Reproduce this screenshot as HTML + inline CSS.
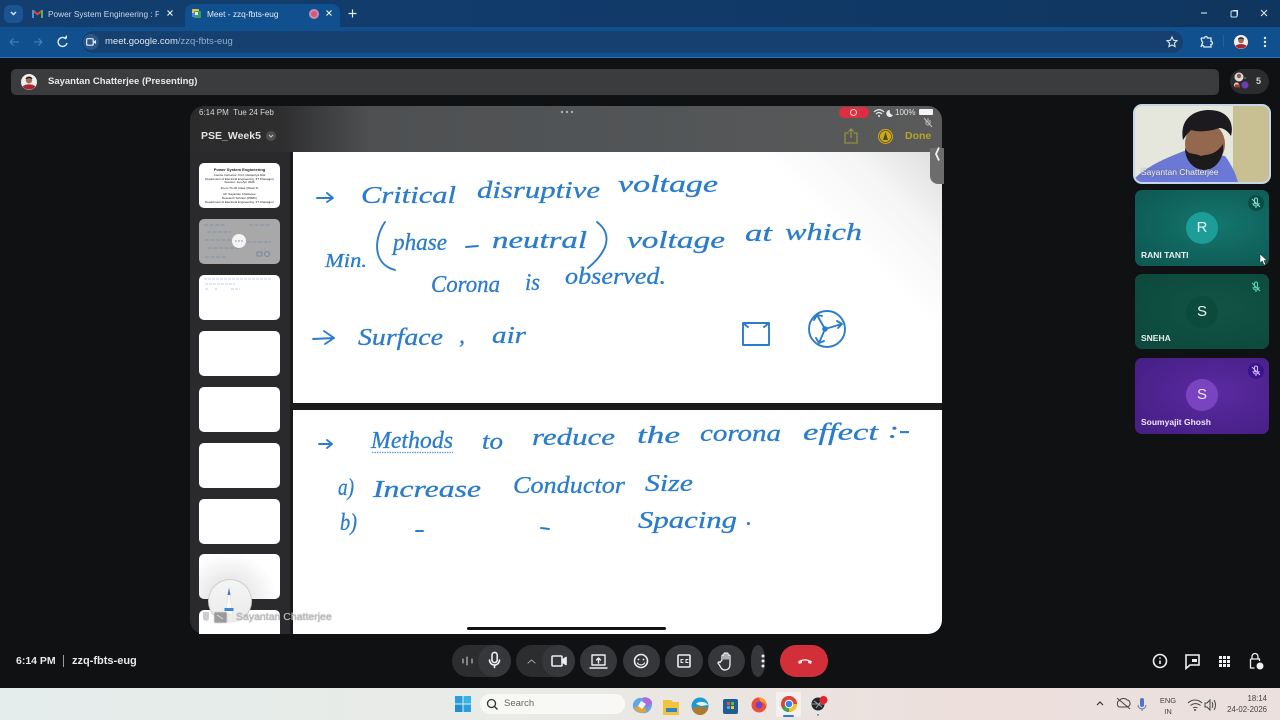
<!DOCTYPE html>
<html><head><meta charset="utf-8"><title>Meet - zzq-fbts-eug</title>
<style>
html,body{margin:0;padding:0;width:1280px;height:720px;overflow:hidden;background:#101113;font-family:"Liberation Sans",sans-serif}
#w{position:absolute;left:0;top:0;width:1280px;height:720px;background:#101113;overflow:hidden;filter:blur(.3px)}
.a{position:absolute}
.t{position:absolute;white-space:nowrap}
svg{position:absolute;overflow:visible}
.th{position:absolute;left:199px;width:81px;background:#fff;border-radius:5px}
.hw text{font-family:"Liberation Serif",serif;font-style:italic;fill:#2b7ccb;stroke:#2b7ccb;stroke-width:.3;font-size:24px}
.hs{fill:none;stroke:#2b7ccb;stroke-width:1.900;stroke-linecap:round;stroke-linejoin:round}
.c{position:absolute;top:645px;height:32px;background:#2c2d2f;border-radius:16px}
.ic{fill:none;stroke:#eceef0;stroke-width:1.6;stroke-linecap:round;stroke-linejoin:round}
</style></head><body><div id="w">
<!-- chrome -->
<div class="a" style="left:0;top:0;width:1280px;height:27px;background:linear-gradient(90deg,#123f70,#113a69 50%,#10365f)"></div>
<div class="a" style="left:0;top:27px;width:1280px;height:30px;background:#11508f"></div>
<div class="a" style="left:0;top:57px;width:1280px;height:1px;background:#2e74b4"></div>
<div class="a" style="left:4px;top:5px;width:19px;height:18px;background:#185592;border-radius:6px"></div>
<svg style="left:0;top:0" width="40" height="28"><path d="M11 12l2.5 2.5L16 12" fill="none" stroke="#dfe9f3" stroke-width="1.400"/></svg>
<div class="a" style="left:185px;top:4px;width:155px;height:23px;background:#11508f;border-radius:8px 8px 0 0"></div>
<svg style="left:32px;top:9px" width="11" height="9" viewBox="0 0 11 9"><path d="M0.800 1.500L5.500 5.200 10.200 1.500" fill="none" stroke="#e0463a" stroke-width="2"/><path d="M1 1v8" stroke="#5a8fd8" stroke-width="2"/><path d="M10 1v8" stroke="#4fb06a" stroke-width="2"/></svg>
<div class="t" style="left:48px;top:8px;width:111px;overflow:hidden;font-size:8.300px;line-height:12px;color:#c9d6e4">Power System Engineering : Pro</div>
<svg style="left:166px;top:9px" width="9" height="9"><path d="M1.500 1.500l5 5M6.500 1.500l-5 5" stroke="#e6edf4" stroke-width="1.200"/></svg>
<svg style="left:191px;top:8px" width="11" height="11" viewBox="0 0 11 11"><rect x="1" y="1" width="7" height="8" rx="1" fill="#f1c232"/><rect x="3" y="3" width="7" height="7" rx="1" fill="#3d9b5f"/><rect x="1" y="5" width="3" height="4" fill="#4285f4"/><rect x="4" y="4" width="3" height="3" fill="#dfe9f3"/></svg>
<div class="t" style="left:207px;top:8px;font-size:8.300px;line-height:12px;color:#e3ebf3">Meet - zzq-fbts-eug</div>
<div class="a" style="left:309px;top:9px;width:6px;height:6px;border-radius:50%;background:#d9557c;border:2px solid #c88db0"></div>
<svg style="left:325px;top:9px" width="9" height="9"><path d="M1.500 1.500l5 5M6.500 1.500l-5 5" stroke="#e6edf4" stroke-width="1.200"/></svg>
<svg style="left:348px;top:9px" width="9" height="9"><path d="M4.500 0.500v8M0.500 4.500h8" stroke="#e6edf4" stroke-width="1.200"/></svg>
<svg style="left:1120px;top:0" width="160" height="28"><path d="M81 13h6" stroke="#d9e3ee" stroke-width="1.100"/><rect x="111" y="11" width="6" height="6" rx="1" fill="none" stroke="#d9e3ee"/><path d="M113 10.500h4.500v5" fill="none" stroke="#d9e3ee"/><path d="M141 10l6 6M147 10l-6 6" stroke="#d9e3ee" stroke-width="1.100"/></svg>
<svg style="left:0;top:27px" width="80" height="30"><path d="M10 15h9M10 15l3.500-3.500M10 15l3.500 3.500M34 15h8M42 15l-3.500-3.500M42 15l-3.500 3.500" fill="none" stroke="#4b83ba" stroke-width="1.100"/><path d="M66 12a4.500 4.500 0 1 0 1 4" fill="none" stroke="#e2eaf3" stroke-width="1.400"/><path d="M63.500 11.500h3.500V8z" fill="#e2eaf3"/></svg>
<div class="a" style="left:82px;top:31px;width:1101px;height:22px;background:#15406f;border-radius:11px"></div>
<div class="a" style="left:83px;top:34px;width:16px;height:16px;background:#2a5788;border-radius:50%"></div>
<svg style="left:86px;top:38px" width="11" height="8"><rect x=".7" y=".7" width="6.500" height="6.500" rx="1" fill="none" stroke="#e3ebf3" stroke-width="1.200"/><path d="M7.500 3.500L10 2v4L7.500 4.500z" fill="#e3ebf3"/></svg>
<div class="t" style="left:105px;top:36px;font-size:9.500px;line-height:12px;color:#dce6f0">meet.google.com<span style="color:#92aecb">/zzq-fbts-eug</span></div>
<svg style="left:1166px;top:36px" width="12" height="12" viewBox="0 0 12 12"><path d="M6 1l1.500 3.300 3.500.4-2.600 2.400.7 3.500L6 8.900l-3.100 1.700.7-3.500L1 4.700l3.500-.4z" fill="none" stroke="#dce6f0" stroke-width="1.100"/></svg>
<svg style="left:1199px;top:35px" width="14" height="14" viewBox="0 0 14 14"><path d="M2 3h3.500a1.500 1.500 0 0 1 3 0H12v3.500a1.500 1.500 0 0 1 0 3V12H5a1.500 1.500 0 0 0-3 0 M2 3l1 3.500a1.500 1.500 0 0 1 0 2.500L2 12" fill="none" stroke="#e3ebf3" stroke-width="1.300"/></svg>
<div class="a" style="left:1223px;top:35px;width:1px;height:12px;background:#2a5f95"></div>
<svg style="left:1234px;top:35px" width="14" height="14" viewBox="0 0 14 14"><circle cx="7" cy="7" r="7" fill="#f2eeee"/><circle cx="7" cy="5.500" r="2.800" fill="#a26a52"/><path d="M4 4.500c0-3 6-3 6 0l-3-1z" fill="#2a1a16"/><path d="M1.500 11c1.500-2.500 9.500-2.500 11 0a7 7 0 0 1-11 0z" fill="#a8272e"/></svg>
<svg style="left:1263px;top:36px" width="4" height="12"><circle cx="2" cy="2" r="1.200" fill="#e3ebf3"/><circle cx="2" cy="6" r="1.200" fill="#e3ebf3"/><circle cx="2" cy="10" r="1.200" fill="#e3ebf3"/></svg>

<!-- presenter bar -->
<div class="a" style="left:11px;top:69px;width:1208px;height:26px;background:#3b3c3d;border-radius:5px"></div>
<svg style="left:21px;top:74px" width="16" height="16" viewBox="0 0 14 14"><circle cx="7" cy="7" r="7" fill="#f2eeee"/><circle cx="7" cy="5.500" r="2.800" fill="#a26a52"/><path d="M4 4.500c0-3 6-3 6 0l-3-1z" fill="#2a1a16"/><path d="M1.500 11c1.500-2.500 9.500-2.500 11 0a7 7 0 0 1-11 0z" fill="#a8272e"/></svg>
<div class="t" style="left:48px;top:75px;font-size:9.500px;line-height:14px;font-weight:bold;color:#e8e9ea">Sayantan Chatterjee (Presenting)</div>
<div class="a" style="left:1230px;top:69px;width:39px;height:25px;background:#2b2c2d;border-radius:13px"></div>
<svg style="left:1233px;top:71px" width="16" height="18"><circle cx="6" cy="6" r="4.500" fill="#e4d9d6"/><circle cx="6" cy="5" r="2.200" fill="#8c5a4a"/><circle cx="3.500" cy="14" r="2.500" fill="#e6d6d2"/><rect x="2" y="13.500" width="5" height="3" fill="#a33"/><circle cx="12" cy="14" r="3.500" fill="#6b3fb4"/><circle cx="12" cy="7" r="1" fill="#2f8a5f"/></svg>
<div class="t" style="left:1256px;top:76px;font-size:9px;line-height:11px;font-weight:bold;color:#cfd0d2">5</div>

<!-- presentation -->
<div class="a" style="left:190px;top:106px;width:752px;height:528px;border-radius:14px;overflow:hidden;background:#1b1b1c">
 <div class="a" style="left:0;top:0;width:752px;height:46px;background:linear-gradient(90deg,#2b2b2c 0,#2e2e2f 12%,#4e5052 24%,#525557 60%,#5a5a5a 100%)"></div>
 <div class="a" style="left:0;top:46px;width:100px;height:482px;background:#2a2a2c"></div>
 <div class="a" style="left:103px;top:46px;width:649px;height:251px;background:linear-gradient(225deg,#dcdcdc 0,#f5f5f5 10%,#fff 20%)"></div>
 <div class="a" style="left:103px;top:304px;width:649px;height:224px;background:#fff"></div>
</div>
<div class="t" style="left:199px;top:107px;font-size:8px;line-height:11px;color:#d6d6d6">6:14 PM &nbsp;Tue 24 Feb</div>
<div class="t" style="left:201px;top:129px;font-size:10.500px;line-height:14px;font-weight:bold;color:#e2e2e2">PSE_Week5</div>
<div class="a" style="left:266px;top:131px;width:10px;height:10px;border-radius:50%;background:#4c4e50"></div>
<svg style="left:266px;top:131px" width="10" height="10"><path d="M3 4l2 2 2-2" fill="none" stroke="#c9c9c9"/></svg>
<svg style="left:560px;top:110px" width="14" height="4"><circle cx="2" cy="2" r="1.200" fill="#a9abad"/><circle cx="7" cy="2" r="1.200" fill="#a9abad"/><circle cx="12" cy="2" r="1.200" fill="#a9abad"/></svg>
<div class="a" style="left:839px;top:107px;width:30px;height:11px;background:#dc2e3f;border-radius:6px"></div>
<div class="a" style="left:850px;top:109px;width:5px;height:5px;border:1px solid #f6d5d8;border-radius:50%"></div>
<svg style="left:873px;top:108px" width="22" height="10"><path d="M1 4c3-3 7-3 10 0M3 6c2-2 4-2 6 0" fill="none" stroke="#eee" stroke-width="1.200"/><circle cx="6" cy="8" r="1" fill="#eee"/><path d="M17 2a3.500 3.500 0 1 0 3 5 3.500 3.500 0 0 1-3-5z" fill="#eee"/></svg>
<div class="t" style="left:895px;top:107px;font-size:8px;line-height:11px;color:#e4e4e4">100%</div>
<div class="a" style="left:919px;top:109px;width:14px;height:6px;background:#f4f4f4;border-radius:1px"></div>
<svg style="left:923px;top:117px" width="10" height="11"><path d="M5 1v5M3 3v3a2 2 0 0 0 4 0V3M1 1l8 9" fill="none" stroke="#bdbdbd"/></svg>
<svg style="left:844px;top:128px" width="14" height="16"><path d="M4.500 5H1v10h12V5H9.500M7 10V1M4.500 3.500L7 1l2.500 2.500" fill="none" stroke="#a09a3a" stroke-width="1.100"/></svg>
<div class="a" style="left:878px;top:129px;width:15px;height:15px;border-radius:50%;background:#c9a81e"></div>
<svg style="left:878px;top:129px" width="15" height="15"><circle cx="7.500" cy="7.500" r="6" fill="none" stroke="#4d4a20" stroke-width=".7"/><path d="M7.500 3L5 11h5z" fill="#4d4a20"/></svg>
<div class="t" style="left:905px;top:130px;width:26px;overflow:hidden;font-size:10.500px;line-height:13px;font-weight:bold;color:#b5a52b">Done</div>
<div class="a" style="left:930px;top:148px;width:14px;height:36px;background:#6c6c6c;border-radius:0 0 0 8px"></div>
<svg style="left:933px;top:146px" width="8" height="16"><path d="M6 1.500L3 8l3 6.500" fill="none" stroke="#f2f2f2" stroke-width="1.800"/></svg>

<!-- thumbnails -->
<div class="th" style="top:163px;height:45px;text-align:center;color:#222;font-size:3px;line-height:3.800px"><div style="font-size:4px;font-weight:bold;padding-top:5px">Power System Engineering</div><div style="margin-top:2px">Course Instructor: Prof. Debapriya Das<br>Department of Electrical Engineering, IIT Kharagpur<br>Session: Jan-Apr 2026</div><div style="margin-top:2px">Zoom TA-03 Class (Week 5)</div><div style="margin-top:2px">Mr. Sayantan Chatterjee<br>Research Scholar (PMRF)<br>Department of Electrical Engineering, IIT Kharagpur</div></div>
<div class="th" style="top:219px;height:45px;background:#a8a8a8;overflow:hidden">
 <svg style="left:0;top:0" width="81" height="45"><path d="M5 6h22M8 13h24M6 21h30M9 29h32M6 38h22M48 23h24M50 6h22" stroke="#7f93ab" stroke-width=".9" stroke-dasharray="4 1.500" fill="none"/><rect x="58" y="33" width="5" height="4" fill="none" stroke="#5f7ea1" stroke-width=".7"/><circle cx="68" cy="35" r="2.500" fill="none" stroke="#5f7ea1" stroke-width=".7"/></svg>
 <div class="a" style="left:33px;top:15px;width:14px;height:14px;border-radius:50%;background:#f4f4f4"></div>
 <svg style="left:36px;top:21px" width="8" height="2"><circle cx="1" cy="1" r=".7" fill="#888"/><circle cx="4" cy="1" r=".7" fill="#888"/><circle cx="7" cy="1" r=".7" fill="#888"/></svg>
</div>
<div class="th" style="top:275px;height:45px;overflow:hidden"><svg style="left:0;top:0" width="81" height="45"><path d="M5 4h68M6 9h30M6 14h3M16 14h2M32 14h9" stroke="#aac2de" stroke-width=".8" stroke-dasharray="3 1" fill="none"/></svg></div>
<div class="th" style="top:331px;height:45px"></div>
<div class="th" style="top:387px;height:45px"></div>
<div class="th" style="top:443px;height:45px"></div>
<div class="th" style="top:499px;height:45px"></div>
<div class="th" style="top:554px;height:45px;background:radial-gradient(circle at 30px 46px,#d6d6d6 0,#eee 38%,#fff 70%)"></div>
<div class="th" style="top:610px;height:24px;border-radius:5px 5px 0 0"></div>
<div class="a" style="left:208px;top:579px;width:42px;height:42px;border-radius:50%;background:linear-gradient(180deg,#f4f4f4,#ececec);border:1px solid #cfcfcf;border-bottom-color:transparent"></div>
<svg style="left:222px;top:586px" width="14" height="30"><path d="M7 1L3.500 28h7z" fill="#fafafa" stroke="#dedede" stroke-width=".6"/><path d="M7 2L5.500 9h3z" fill="#3f7cc6"/><rect x="2.500" y="22" width="9" height="3" fill="#3f86d6"/></svg>
<svg style="left:200px;top:610px" width="36" height="16"><path d="M6 2v6M3 2v6a3 3 0 0 0 6 0V2z" fill="#b9b9b9" opacity=".7"/><rect x="14" y="2" width="13" height="11" rx="1.500" fill="#777" stroke="#ccc" stroke-width=".8" opacity=".7"/><path d="M17 5l6 4" stroke="#ddd"/></svg>
<div class="t" style="left:236px;top:611px;font-size:10.500px;line-height:13px;color:#c2c2c2;text-shadow:0 0 1px #666">Sayantan Chatterjee</div>
<div class="a" style="left:467px;top:627px;width:199px;height:3px;background:#111;border-radius:2px"></div>

<!-- handwriting -->
<svg class="hw" style="left:0;top:0" width="1280" height="720">
 <text x="361" y="203" textLength="95" lengthAdjust="spacingAndGlyphs">Critical</text>
 <text x="477" y="198" textLength="123" lengthAdjust="spacingAndGlyphs">disruptive</text>
 <text x="618" y="192" textLength="100" lengthAdjust="spacingAndGlyphs">voltage</text>
 <text x="325" y="267" textLength="42" lengthAdjust="spacingAndGlyphs" style="font-size:20px">Min.</text>
 <text x="393" y="250" textLength="54" lengthAdjust="spacingAndGlyphs">phase</text>
 <text x="492" y="248" textLength="95" lengthAdjust="spacingAndGlyphs">neutral</text>
 <text x="627" y="248" textLength="98" lengthAdjust="spacingAndGlyphs">voltage</text>
 <text x="745" y="241" textLength="27" lengthAdjust="spacingAndGlyphs">at</text>
 <text x="785" y="240" textLength="77" lengthAdjust="spacingAndGlyphs">which</text>
 <text x="431" y="292" textLength="69" lengthAdjust="spacingAndGlyphs">Corona</text>
 <text x="525" y="290" textLength="15" lengthAdjust="spacingAndGlyphs">is</text>
 <text x="565" y="284" textLength="101" lengthAdjust="spacingAndGlyphs">observed.</text>
 <text x="358" y="345" textLength="85" lengthAdjust="spacingAndGlyphs">Surface</text>
 <text x="459" y="343">,</text>
 <text x="492" y="343" textLength="34" lengthAdjust="spacingAndGlyphs">air</text>
 <text x="371" y="448" textLength="82" lengthAdjust="spacingAndGlyphs">Methods</text>
 <text x="482" y="449" textLength="21" lengthAdjust="spacingAndGlyphs">to</text>
 <text x="532" y="445" textLength="83" lengthAdjust="spacingAndGlyphs">reduce</text>
 <text x="637" y="443" textLength="43" lengthAdjust="spacingAndGlyphs">the</text>
 <text x="700" y="441" textLength="81" lengthAdjust="spacingAndGlyphs">corona</text>
 <text x="803" y="440" textLength="75" lengthAdjust="spacingAndGlyphs">effect</text>
 <text x="888" y="438" textLength="22" lengthAdjust="spacingAndGlyphs">:-</text>
 <text x="338" y="495" textLength="16" lengthAdjust="spacingAndGlyphs">a)</text>
 <text x="373" y="497" textLength="108" lengthAdjust="spacingAndGlyphs">Increase</text>
 <text x="513" y="493" textLength="112" lengthAdjust="spacingAndGlyphs">Conductor</text>
 <text x="645" y="491" textLength="48" lengthAdjust="spacingAndGlyphs">Size</text>
 <text x="340" y="530" textLength="17" lengthAdjust="spacingAndGlyphs">b)</text>
 <text x="638" y="528" textLength="99" lengthAdjust="spacingAndGlyphs">Spacing</text>
 <text x="746" y="525">.</text>
 <path class="hs" d="M317 198h15M327 193l6 5-6 4"/>
 <path class="hs" d="M385 222C374 238 372 264 395 270"/>
 <path class="hs" d="M466 247l12-1"/>
 <path class="hs" d="M597 222C610 232 612 248 588 268"/>
 <path class="hs" d="M313 339l21-1M324 331l10 7-9 6"/>
 <path class="hs" d="M743 323h26v22h-26zM743 323l5 4M769 323l-5 4"/>
 <circle class="hs" cx="827" cy="329" r="18"/>
 <path class="hs" d="M825 329l-8-14M817 315l-3 5M817 315l5 1M825 329l17-5M842 324l-5-3M842 324l-4 4M825 329l-6 14M819 343l-3-5M819 343l5-2"/>
 <circle cx="825" cy="329" r="2.800" fill="#2b7ccb"/>
 <path class="hs" d="M319 444h13M327 440l5 4-5 4"/>
 <path d="M372 452.500h81" fill="none" stroke="#5a9ad8" stroke-width="1.300" stroke-dasharray="1.500 1"/>
 <path class="hs" d="M416 531l7 0M541 528l8 1"/>
</svg>

<!-- tiles -->
<div class="a" style="left:1133px;top:104px;width:134px;height:76px;border:2px solid #c3d6ea;border-radius:9px;overflow:hidden;background:#e3e3d6">
 <svg style="left:0;top:0" width="134" height="76" viewBox="0 0 134 76">
  <rect width="100" height="76" fill="#e6e7dc"/><rect x="98" width="36" height="76" fill="#c8bf93"/>
  <path d="M0 72C12 60 35 50 52 44L90 50C96 58 100 66 103 76H0z" fill="#6b78d6"/>
  <ellipse cx="70" cy="38" rx="20" ry="22" fill="#93684f"/>
  <path d="M48 34C44 12 60 4 74 4 90 4 100 14 96 30 92 24 88 22 84 22 74 26 62 26 56 24 52 28 50 31 48 34z" fill="#1c1a1e"/>
  <path d="M50 42C54 50 58 46 66 50 72 48 80 50 88 38 90 52 80 64 70 64 58 64 50 54 50 42z" fill="#1d1a1c"/>
 </svg>
</div>
<div class="t" style="left:1141px;top:166px;font-size:8.500px;line-height:12px;color:#eef0f5;text-shadow:0 0 2px #666">Sayantan Chatterjee</div>

<div class="a" style="left:1135px;top:190px;width:134px;height:76px;border-radius:7px;background:radial-gradient(ellipse at 60% 45%,#14766e,#0e5b55 80%)"></div>
<div class="a" style="left:1186px;top:212px;width:32px;height:32px;border-radius:50%;background:#1c9d98"></div>
<div class="t" style="left:1186px;top:219px;width:32px;text-align:center;font-size:15px;line-height:18px;color:#e6f4f3">R</div>
<div class="a" style="left:1248px;top:195px;width:16px;height:16px;border-radius:50%;background:#0b4b46"></div>
<div class="t" style="left:1141px;top:250px;font-size:8.500px;line-height:11px;font-weight:bold;color:#e6eeee">RANI TANTI</div>
<svg style="left:1259px;top:253px" width="9" height="13"><path d="M1 1v9l2.300-2 1.700 4 1.500-.7L5 7.500h3z" fill="#fff" stroke="#222" stroke-width=".5"/></svg>

<div class="a" style="left:1135px;top:274px;width:134px;height:75px;border-radius:7px;background:radial-gradient(ellipse at 60% 45%,#105446,#0d4a3d 80%)"></div>
<div class="a" style="left:1186px;top:296px;width:32px;height:32px;border-radius:50%;background:#0c4a3c"></div>
<div class="t" style="left:1186px;top:303px;width:32px;text-align:center;font-size:15px;line-height:18px;color:#e6f4f0">S</div>
<div class="t" style="left:1141px;top:333px;font-size:8.500px;line-height:11px;font-weight:bold;color:#e6eeee">SNEHA</div>

<div class="a" style="left:1135px;top:358px;width:134px;height:76px;border-radius:7px;background:radial-gradient(ellipse at 60% 45%,#5a2aa0,#471f87 85%)"></div>
<div class="a" style="left:1186px;top:379px;width:32px;height:32px;border-radius:50%;background:#7a44c0"></div>
<div class="t" style="left:1186px;top:386px;width:32px;text-align:center;font-size:15px;line-height:18px;color:#f0e8fa">S</div>
<div class="a" style="left:1248px;top:363px;width:16px;height:16px;border-radius:50%;background:#3a1490"></div>
<div class="t" style="left:1141px;top:417px;font-size:8.500px;line-height:11px;font-weight:bold;color:#ece6f6">Soumyajit Ghosh</div>
<svg style="left:1250px;top:197px" width="12" height="12"><g fill="none" stroke="#7fd6c8" stroke-width="1.100"><path d="M4.500 2.500v3a1.500 1.500 0 0 0 3 0v-3a1.500 1.500 0 0 0-3 0zM3 6a3 3 0 0 0 6 0M6 9v2M2 2l8 8"/></g></svg>
<svg style="left:1250px;top:281px" width="12" height="12"><g fill="none" stroke="#5fd0ae" stroke-width="1.100"><path d="M4.500 2.500v3a1.500 1.500 0 0 0 3 0v-3a1.500 1.500 0 0 0-3 0zM3 6a3 3 0 0 0 6 0M6 9v2M2 2l8 8"/></g></svg>
<svg style="left:1250px;top:365px" width="12" height="12"><g fill="none" stroke="#d2b4f5" stroke-width="1.100"><path d="M4.500 2.500v3a1.500 1.500 0 0 0 3 0v-3a1.500 1.500 0 0 0-3 0zM3 6a3 3 0 0 0 6 0M6 9v2M2 2l8 8"/></g></svg>

<!-- bottom bar -->
<div class="t" style="left:16px;top:654px;font-size:10.500px;line-height:14px;font-weight:bold;color:#e8e9ea">6:14 PM</div>
<div class="a" style="left:63px;top:655px;width:1px;height:12px;background:#9a9b9d"></div>
<div class="t" style="left:72px;top:654px;font-size:11px;line-height:14px;font-weight:bold;color:#e8e9ea">zzq-fbts-eug</div>

<div class="c" style="left:452px;width:59px"></div><div class="c" style="left:478px;width:33px;background:#36373a"></div>
<div class="c" style="left:516px;width:59px"></div><div class="c" style="left:542px;width:33px;background:#36373a"></div>
<div class="c" style="left:580px;width:37px;background:#36373a"></div>
<div class="c" style="left:623px;width:37px;background:#36373a"></div>
<div class="c" style="left:665px;width:38px;background:#36373a"></div>
<div class="c" style="left:708px;width:37px;background:#36373a"></div>
<div class="c" style="left:751px;width:14px;border-radius:7px/14px;background:#36373a"></div>
<div class="c" style="left:780px;width:48px;background:#d32f3a"></div>
<svg style="left:440px;top:640px" width="400" height="48">
 <g class="ic">
  <path d="M23 19v4M27 17v8M32 19v4" stroke="#c5c7ca" stroke-width="1.100"/>
  <path d="M52 15a2.600 2.600 0 0 1 5.200 0v5a2.600 2.600 0 0 1-5.200 0zM49.500 20a5 5 0 0 0 10 0M54.500 25.500v2"/>
  <path d="M88 23l3.500-3 3.500 3" stroke="#9d9fa2" stroke-width="1.100"/>
  <rect x="112" y="16" width="10" height="10" rx="1"/><path d="M122.500 20l3.500-2.500v7l-3.500-2.500z" fill="#eceef0"/>
  <path d="M152 15h13v10h-13zM150 28h17M158.500 23v-5M156.500 20l2-2 2 2" stroke-width="1.400"/>
  <circle cx="201" cy="21" r="6.500"/><circle cx="198.500" cy="19.500" r=".9" fill="#eceef0" stroke="none"/><circle cx="203.500" cy="19.500" r=".9" fill="#eceef0" stroke="none"/><path d="M197.500 23c1.500 2.500 5.500 2.500 7 0" stroke-width="1.200"/>
  <rect x="238" y="15" width="12" height="12" rx="1"/><path d="M243 19.500h-2v3h2M248 19.500h-2v3h2" stroke-width="1.100"/>
  <path d="M282 20v-4a1 1 0 0 1 2 0v3-5a1 1 0 0 1 2 0v5-5a1 1 0 0 1 2 0v5-3a1 1 0 0 1 2 0v8c0 4-2 6-5 6s-4-2-5-4l-2-3c0-1 1-1.500 2-.5z" stroke-width="1.300"/>
 </g>
 <circle cx="323" cy="16" r="1.500" fill="#eceef0"/><circle cx="323" cy="21" r="1.500" fill="#eceef0"/><circle cx="323" cy="26" r="1.500" fill="#eceef0"/>
 <path d="M358 21.500c4-3 10-3 14 0l-1 2.500-3-1v-2c-2-.5-4-.5-6 0v2l-3 1z" fill="#f6e6e7"/>
</svg>
<svg style="left:1150px;top:650px" width="120" height="24">
 <g fill="none" stroke="#eef0f2" stroke-width="1.600">
  <circle cx="10" cy="11" r="6.500"/><path d="M10 10.500v3.500M10 7.500v1.200"/>
  <path d="M36 5h13v10h-9l-4 3.500z"/><rect x="42" y="9" width="5" height="3" fill="#eef0f2" stroke="none"/>
  <path d="M102 9V6.500a3 3 0 0 1 6 0V9" stroke-width="1.300"/><path d="M100.500 9h9v2M100.500 9v9h4" stroke-width="1.300"/>
 </g>
 <g fill="#eef0f2"><rect x="69" y="6" width="3" height="3"/><rect x="73" y="6" width="3" height="3"/><rect x="77" y="6" width="3" height="3"/><rect x="69" y="10" width="3" height="3"/><rect x="73" y="10" width="3" height="3"/><rect x="77" y="10" width="3" height="3"/><rect x="69" y="14" width="3" height="3"/><rect x="73" y="14" width="3" height="3"/><rect x="77" y="14" width="3" height="3"/><circle cx="110" cy="16" r="3.500"/></g>
</svg>

<!-- taskbar -->
<div class="a" style="left:0;top:688px;width:1280px;height:32px;background:linear-gradient(90deg,#e4ecec,#e9ebe6 40%,#ecdfdc 75%,#ebe0de)"></div>
<svg style="left:455px;top:696px" width="16" height="16"><rect width="7.500" height="7.500" fill="#29a0dd"/><rect x="8.500" width="7.500" height="7.500" fill="#36b3ea"/><rect y="8.500" width="7.500" height="7.500" fill="#1e8fd2"/><rect x="8.500" y="8.500" width="7.500" height="7.500" fill="#29a0dd"/></svg>
<div class="a" style="left:480px;top:694px;width:145px;height:20px;background:#f8f8f6;border-radius:10px"></div>
<svg style="left:486px;top:698px" width="13" height="13"><circle cx="5.500" cy="5.500" r="4" fill="none" stroke="#333" stroke-width="1.300"/><path d="M8.500 8.500l3 3" stroke="#333" stroke-width="1.300"/></svg>
<div class="t" style="left:504px;top:698px;font-size:9.500px;line-height:12px;color:#666">Search</div>
<div class="a" style="left:776px;top:692px;width:25px;height:25px;background:#f3f0ee"></div>
<svg style="left:630px;top:692px" width="200" height="28">
 <g transform="translate(-2,0)"><path d="M5 12c2-7 10-8 13-3 3-4 7-1 6 4-1 6-5 9-10 8-5 0-10-3-9-9z" fill="#5fa8e8"/><path d="M14 6c4-2 9 0 10 5l-5 5z" fill="#b06ad8"/><path d="M6 16c3 5 9 6 13 3l-5-6z" fill="#e8a23d"/><path d="M13 9l5 3-4 5-4-3z" fill="#f4f4f4"/></g>
 <g transform="translate(-7,0)"><path d="M40 8h8l2 2h6v13H40z" fill="#f2c43b"/><rect x="43" y="16" width="11" height="4" fill="#2f85c9"/></g>
 <circle cx="70" cy="14" r="8.500" fill="#1b9ad6"/><path d="M62 17c4-3 13-3 16 0-2 5-5 6-8 6-4 0-7-3-8-6z" fill="#b07a2c"/><path d="M66 12c2-3 10-3 12 1l-7 1z" fill="#e8f2f6"/>
 <rect x="93" y="7" width="15" height="15" rx="2" fill="#1e5e93"/><rect x="97" y="10" width="3" height="3" fill="#e2533f"/><rect x="101" y="10" width="3" height="3" fill="#6fb04e"/><rect x="97" y="14" width="3" height="3" fill="#4aa3e0"/><rect x="101" y="14" width="3" height="3" fill="#f1c232"/>
 <circle cx="129" cy="13" r="7.500" fill="#ea4f3a"/><path d="M129 5.500a7.500 7.500 0 0 1 7 8c-2-4-5-3-6-5 0-1-1-2-1-3z" fill="#f7a12f"/><circle cx="129" cy="13" r="3.500" fill="#7a3fc0"/>
</svg>
<svg style="left:781px;top:696px" width="16" height="16" viewBox="0 0 16 16"><circle cx="8" cy="8" r="8" fill="#dc4437"/><path d="M8 8L1 12a8 8 0 0 0 7 4z" fill="#3aa757"/><path d="M8 16a8 8 0 0 0 8-8 8 8 0 0 0-2-5.300L8 8z" fill="#f5c02a"/><path d="M8 8H16a8 8 0 0 0-8-8 8 8 0 0 0-7 4z" fill="#dc4437"/><circle cx="8" cy="8" r="4.300" fill="#fff"/><circle cx="8" cy="8" r="3.300" fill="#3b82e8"/></svg>
<div class="a" style="left:783px;top:715px;width:11px;height:2px;background:#2f7cc8;border-radius:1px"></div>
<svg style="left:811px;top:695px" width="18" height="22"><circle cx="7" cy="9" r="6.500" fill="#25282b"/><path d="M3 6l8 6M11 5l-6 8M1 9h12" stroke="#aab1b6" stroke-width=".8"/><circle cx="12.500" cy="5" r="4" fill="#e8202f"/><rect x="6" y="19" width="2" height="1.500" fill="#888"/></svg>

<svg style="left:1090px;top:692px" width="110" height="24">
 <path d="M7 13l3-3 3 3" fill="none" stroke="#333" stroke-width="1.200"/>
 <path d="M29 15a4 4 0 0 1 1-7c1-2 6-2 7 0 3 0 4 4 2 6-1 1-2 1-3 1zM27 6l13 11" fill="none" stroke="#444" stroke-width="1"/>
 <path d="M50 8a2 2 0 0 1 4 0v5a2 2 0 0 1-4 0z" fill="#4f74c8"/><path d="M48 13a4 4 0 0 0 8 0M52 17v2" fill="none" stroke="#4f74c8"/>
</svg>
<div class="t" style="left:1156px;top:695px;width:24px;text-align:center;font-size:7.500px;line-height:11px;color:#444">ENG<br>IN</div>
<svg style="left:1186px;top:698px" width="32" height="14">
 <path d="M2 5c4-4 10-4 14 0M4.500 7.500c3-2.500 7-2.500 10 0M7 10c1.500-1 3-1 4.500 0" fill="none" stroke="#444"/><circle cx="9" cy="12" r="1" fill="#444"/>
 <path d="M19 5h2l3-3v10l-3-3h-2zM26 4c1 2 1 4 0 6M28 2c2 3 2 7 0 10" fill="none" stroke="#444"/>
</svg>
<div class="t" style="left:1220px;top:693px;width:47px;text-align:right;font-size:7.800px;line-height:11px;color:#444">18:14<br>24-02-2026</div>
</div></body></html>
